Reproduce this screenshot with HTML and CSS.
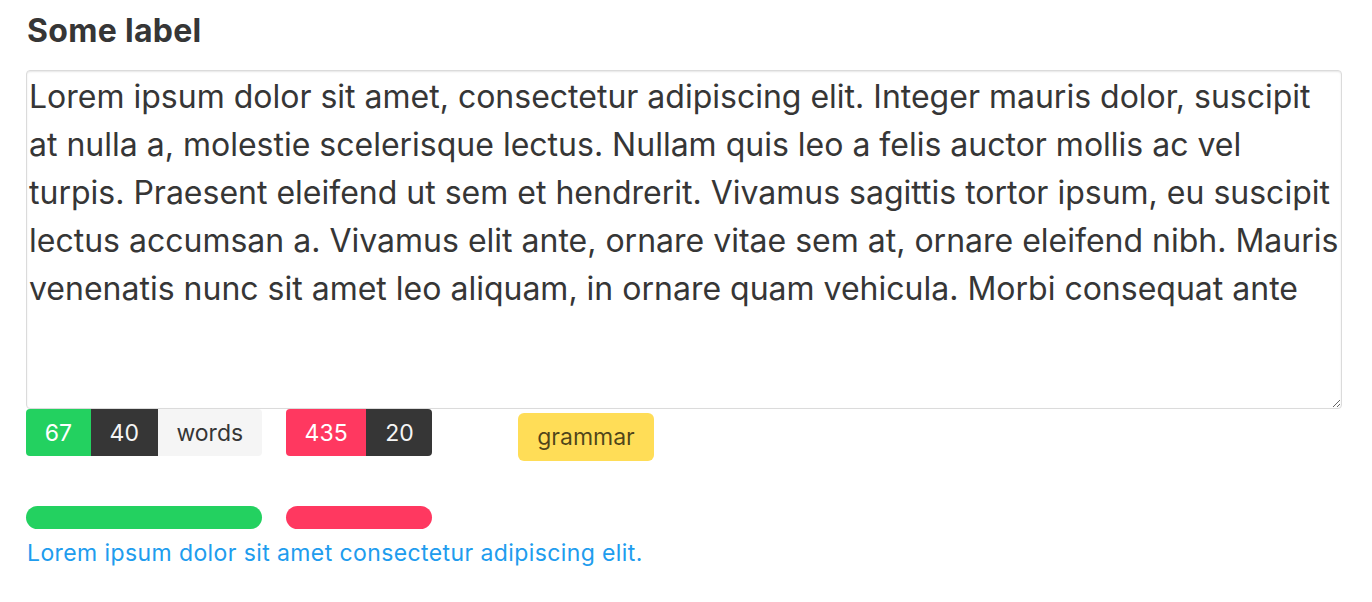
FILE: index.html
```html
<!DOCTYPE html>
<html lang="en">
<head>
<meta charset="utf-8">
<title>Field</title>
<link rel="stylesheet" href="styles.css">
</head>
<body>
<div class="field">
  <label class="label" for="ta">Some label</label>
  <textarea id="ta" class="textarea">Lorem ipsum dolor sit amet, consectetur adipiscing elit. Integer mauris dolor, suscipit at nulla a, molestie scelerisque lectus. Nullam quis leo a felis auctor mollis ac vel turpis. Praesent eleifend ut sem et hendrerit. Vivamus sagittis tortor ipsum, eu suscipit lectus accumsan a. Vivamus elit ante, ornare vitae sem at, ornare eleifend nibh. Mauris venenatis nunc sit amet leo aliquam, in ornare quam vehicula. Morbi consequat ante</textarea>
  <div class="stats">
    <div class="col col-words">
      <div class="tags">
        <span class="tag is-success">67</span>
        <span class="tag is-dark">40</span>
        <span class="tag is-light">words</span>
      </div>
      <div class="progress is-success"></div>
    </div>
    <div class="col col-chars">
      <div class="tags">
        <span class="tag is-danger">435</span>
        <span class="tag is-dark">20</span>
      </div>
      <div class="progress is-danger"></div>
    </div>
    <div class="col col-grammar">
      <span class="tag is-warning">grammar</span>
    </div>
  </div>
  <p class="help">Lorem ipsum dolor sit amet consectetur adipiscing elit.</p>
</div>
</body>
</html>
```
FILE: styles.css
```css
html, body {
  margin: 0;
  padding: 0;
  background: #fff;
}
body {
  font-family: Inter, "Noto Sans", sans-serif;
  color: #363636;
}
.field {
  width: 1316px;
  padding: 13px 0 0 26px;
}
.label {
  display: block;
  font-size: 32px;
  font-weight: 700;
  letter-spacing: 0.3px;
  line-height: 36px;
  margin: 0 0 21px 1px;
}
.textarea {
  display: block;
  box-sizing: border-box;
  width: 1316px;
  height: 339px;
  margin: 0;
  padding: 2px 0 2px 2px;
  border: 1px solid #dbdbdb;
  border-radius: 4px;
  box-shadow: inset 0 1px 2px rgba(10,10,10,.1);
  font-family: Inter, "Noto Sans", sans-serif;
  font-size: 32px;
  line-height: 48px;
  color: #363636;
  background: #fff;
  resize: vertical;
  outline: none;
}
.stats {
  display: flex;
  align-items: flex-start;
  gap: 24px;
}
.col {
  display: flex;
  flex-direction: column;
  gap: 50px;
}
.col-grammar {
  margin-left: 62px;
  padding-top: 4px;
}
.tags {
  display: flex;
}
.tag {
  display: inline-flex;
  align-items: center;
  height: 47px;
  padding: 0 18.75px;
  font-size: 23px;
  box-sizing: border-box;
}
.tags .tag:first-child { border-radius: 4px 0 0 4px; }
.tags .tag:last-child { border-radius: 0 4px 4px 0; }
.is-success { background: #23d160; color: #fff; }
.is-danger { background: #ff3860; color: #fff; }
.is-dark { background: #363636; color: #f5f5f5; }
.is-light { background: #f5f5f5; color: #363636; }
.tag.is-warning {
  background: #ffdd57;
  color: rgba(0,0,0,.7);
  height: 48px;
  border-radius: 6px;
}
.progress {
  height: 23px;
  border-radius: 12px;
}
.help {
  margin: 8px 0 0 1px;
  font-size: 23px;
  letter-spacing: 0.4px;
  line-height: 33px;
  color: #209cee;
}
```
